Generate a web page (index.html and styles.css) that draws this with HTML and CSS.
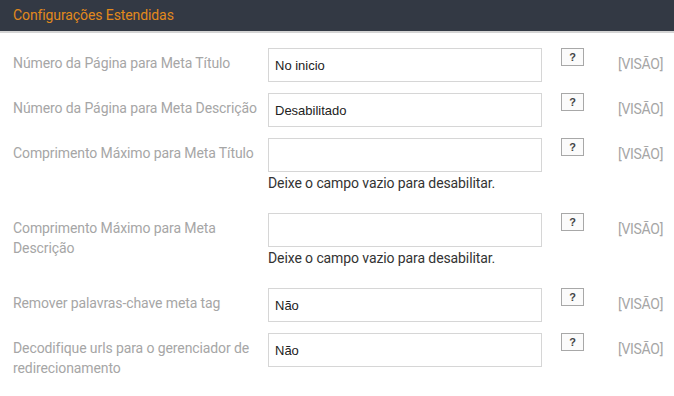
FILE: index.html
```html
<!DOCTYPE html>
<html lang="pt">
<head>
  <meta charset="UTF-8" />
  <title>Configurações Estendidas</title>
  <link rel="stylesheet" href="styles.css">
</head>
<body>
  <div class="panel-heading">Configurações Estendidas</div>

  <div class="panel-body">
    <div class="form-row">
      <label class="form-label">Número da Página para Meta Título</label>
      <div class="form-field">
        <input type="text" class="form-input" value="No inicio" />
      </div>
      <button class="help-btn">?</button>
      <span class="view-link">[VISÃO]</span>
    </div>

    <div class="form-row">
      <label class="form-label">Número da Página para Meta Descrição</label>
      <div class="form-field">
        <input type="text" class="form-input" value="Desabilitado" />
      </div>
      <button class="help-btn">?</button>
      <span class="view-link">[VISÃO]</span>
    </div>

    <div class="form-row">
      <label class="form-label">Comprimento Máximo para Meta Título</label>
      <div class="form-field">
        <input type="text" class="form-input" value="" />
        <div class="form-help">Deixe o campo vazio para desabilitar.</div>
      </div>
      <button class="help-btn">?</button>
      <span class="view-link">[VISÃO]</span>
    </div>

    <div class="form-row">
      <label class="form-label">Comprimento Máximo para Meta Descrição</label>
      <div class="form-field">
        <input type="text" class="form-input" value="" />
        <div class="form-help">Deixe o campo vazio para desabilitar.</div>
      </div>
      <button class="help-btn">?</button>
      <span class="view-link">[VISÃO]</span>
    </div>

    <div class="form-row">
      <label class="form-label">Remover palavras-chave meta tag</label>
      <div class="form-field">
        <input type="text" class="form-input" value="Não" />
      </div>
      <button class="help-btn">?</button>
      <span class="view-link">[VISÃO]</span>
    </div>

    <div class="form-row">
      <label class="form-label">Decodifique urls para o gerenciador de redirecionamento</label>
      <div class="form-field">
        <input type="text" class="form-input" value="Não" />
      </div>
      <button class="help-btn">?</button>
      <span class="view-link">[VISÃO]</span>
    </div>
  </div>
</body>
</html>
```

FILE: styles.css
```css
body {
  margin: 0;
  background-color: #ffffff;
  font-family: Roboto, sans-serif;
  font-size: 14px;
  letter-spacing: -0.1px;
}

.panel-heading {
  background-color: #333944;
  color: #e2891c;
  height: 31px;
  line-height: 31px;
  padding-left: 13px;
  border-bottom: 2px solid #d4d4d4;
}

.panel-body {
  padding-top: 15px;
}

.form-row {
  display: flex;
  align-items: flex-start;
  margin-bottom: 11px;
}

.form-label {
  width: 255px;
  padding-left: 13px;
  padding-top: 5px;
  line-height: 20px;
  color: #a6a6a6;
}

.form-field {
  width: 274px;
}

.form-input {
  display: block;
  box-sizing: border-box;
  width: 274px;
  height: 34px;
  margin: 0;
  padding: 0 6px;
  border: 1px solid #d6d6d6;
  border-radius: 0;
  font-family: "Liberation Sans", Arial, sans-serif;
  font-size: 13px;
  letter-spacing: 0;
  color: #222;
  outline: none;
}

.form-help {
  line-height: 20px;
  padding-top: 1px;
  margin-bottom: 9px;
  color: #333;
}

.help-btn {
  box-sizing: border-box;
  width: 23px;
  height: 18px;
  margin-left: 19px;
  padding: 0;
  border: 1px solid #a8a8a8;
  background-color: #fbfbfb;
  font-family: "Liberation Sans", Arial, sans-serif;
  font-size: 11px;
  font-weight: bold;
  color: #444;
  line-height: 14px;
}

.view-link {
  margin-left: 34px;
  padding-top: 6px;
  line-height: 20px;
  letter-spacing: -0.3px;
  color: #a6a6a6;
}
```
